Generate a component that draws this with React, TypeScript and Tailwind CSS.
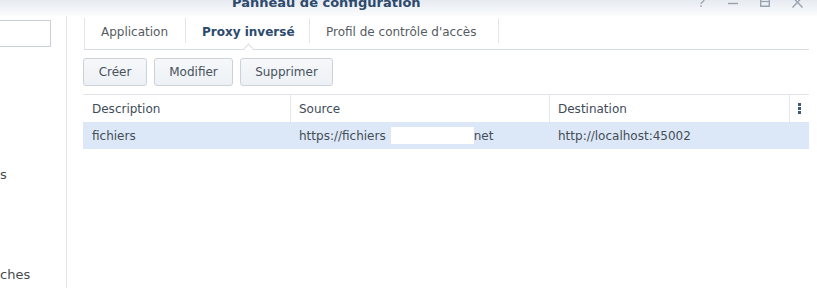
const COLUMNS = [
  { label: 'Description', width: 'w-[208px]' },
  { label: 'Source', width: 'w-[259px]' },
  { label: 'Destination', width: 'w-[240px]' },
];

const TABS = [
  { label: 'Application', width: 'w-[100px]' },
  { label: 'Proxy inversé', width: 'w-[123px]' },
  { label: "Profil de contrôle d'accès", width: 'w-[188px]' },
];

function WindowControls() {
  return (
    <div className="flex items-start gap-[22px] pr-[14px] text-[#9aa3ad]">
      <svg width="10" height="8" viewBox="0 0 10 8" className="-mt-px">
        <path d="M2 0 C2 -2 8 -2 8 1 C8 3 5 3 5 5" fill="none" stroke="currentColor" strokeWidth="1.4" />
        <rect x="4.3" y="6.3" width="1.5" height="1.5" fill="currentColor" />
      </svg>
      <svg width="10" height="8" viewBox="0 0 10 8">
        <path d="M0 3.5 H10" stroke="currentColor" strokeWidth="1.4" />
      </svg>
      <svg width="10" height="8" viewBox="0 0 10 8">
        <path d="M0.7 -2 V6.3 H9.3 V-2" fill="none" stroke="currentColor" strokeWidth="1.4" />
        <path d="M0.7 1.5 H9.3" stroke="currentColor" strokeWidth="1.2" />
      </svg>
      <svg width="11" height="8" viewBox="0 0 11 8">
        <path d="M0.5 -3 L10.5 7.5 M10.5 -3 L0.5 7.5" stroke="currentColor" strokeWidth="1.4" />
      </svg>
    </div>
  );
}

function Tabs() {
  return (
    <div className="relative ml-[2px] mr-[8px] mt-[2px] flex h-[32px] border-b border-[#d9dee4]">
      <div className="w-px self-stretch bg-[#e2e6ea]" />
      {TABS.map((t, i) => (
        <div key={t.label} className="flex">
          <div
            className={
              'flex items-center pb-[3px] pl-4 text-[12px] ' +
              t.width +
              (i === 1 ? ' font-bold text-[#2c4a6e]' : ' text-[#555b62]')
            }
          >
            {t.label}
          </div>
          <div className="h-[25px] w-px bg-[#e2e6ea]" />
        </div>
      ))}
      {/* caret under the active tab */}
      <div className="absolute left-[161px] top-[27px] h-[7px] w-[7px] rotate-45 border-l border-t border-[#d9dee4] bg-white" />
    </div>
  );
}

function Button({ label, width }: { label: string; width: string }) {
  return (
    <button
      className={
        'h-[28px] rounded-[3px] border border-[#cbd2da] bg-gradient-to-b from-[#f6f8fa] to-[#edf1f5] text-[12px] text-[#48525d] ' +
        width
      }
    >
      {label}
    </button>
  );
}

export default function App() {
  return (
    <div
      className="flex h-[288px] w-[817px] flex-col overflow-hidden bg-white"
      style={{ fontFamily: '"DejaVu Sans", Verdana, sans-serif' }}
    >
      {/* title bar */}
      <div className="flex h-[16px] shrink-0 items-start justify-between bg-gradient-to-b from-[#e6ebf1] to-[#fbfcfd]">
        <div className="-mt-[7px] pl-[232px] text-[13px] font-bold text-[#2d4a6d]">Panneau de configuration</div>
        <WindowControls />
      </div>

      <div className="flex flex-1">
        {/* sidebar */}
        <div className="flex w-[67px] shrink-0 flex-col border-r border-[#e1e4e8] text-[13px] text-[#464b51]">
          <div className="mt-[4px] h-[27px] w-[51px] border border-l-0 border-[#cad0d7] bg-white" />
          <div className="mt-[120px] leading-[16px]">s</div>
          <div className="mt-[84px] leading-[16px]">ches</div>
        </div>

        {/* main */}
        <div className="flex flex-1 flex-col pl-[15px]">
          <Tabs />

          <div className="mt-[8px] flex gap-[7px] pl-px">
            <Button label="Créer" width="w-[64px]" />
            <Button label="Modifier" width="w-[79px]" />
            <Button label="Supprimer" width="w-[93px]" />
          </div>

          <div className="ml-px mr-[8px] mt-[8px] border-t border-[#e1e5e9] text-[12px]">
            <div className="flex h-[27px] items-center text-[#3e4b59]">
              {COLUMNS.map((c, i) => (
                <div
                  key={c.label}
                  className={'flex h-full items-center border-r border-[#e4e7ea] ' + c.width + (i === 0 ? ' pl-[9px]' : ' pl-[8px]')}
                >
                  {c.label}
                </div>
              ))}
              <div className="flex flex-1 justify-center">
                <svg width="3" height="11" viewBox="0 0 3 11">
                  <rect x="0" y="0" width="3" height="3" fill="#3d5777" />
                  <rect x="0" y="4" width="3" height="3" fill="#3d5777" />
                  <rect x="0" y="8" width="3" height="3" fill="#3d5777" />
                </svg>
              </div>
            </div>
            <div className="flex h-[27px] items-center bg-[#dce8f7] text-[#454d56]">
              <div className="w-[208px] pl-[9px]">fichiers</div>
              <div className="flex w-[259px] items-center pl-[8px]">
                <span>https://fichiers</span>
                <span className="ml-[5px] inline-block h-[17px] w-[83px] bg-white" />
                <span>net</span>
              </div>
              <div className="pl-[8px]">http://localhost:45002</div>
            </div>
          </div>
        </div>
      </div>
    </div>
  );
}
